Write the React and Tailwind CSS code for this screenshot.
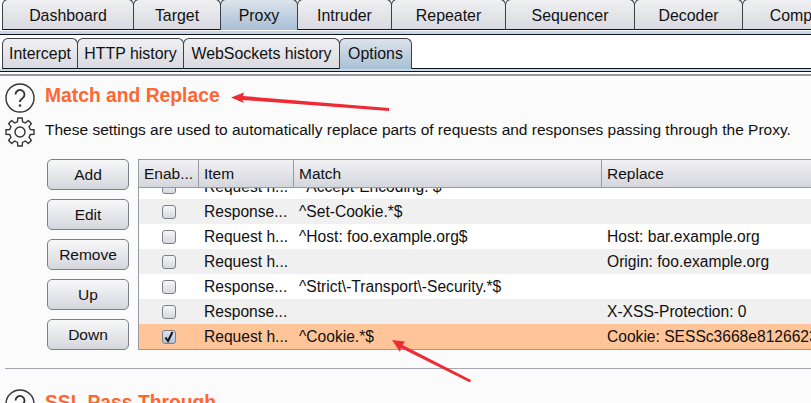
import React from 'react';

const mainTabs = [
  ['Dashboard', 132], ['Target', 88], ['Proxy', 78], ['Intruder', 95],
  ['Repeater', 115], ['Sequencer', 130], ['Decoder', 109], ['Comparer', 126],
];
const subTabs = [['Intercept', 76], ['HTTP history', 107], ['WebSockets history', 157], ['Options', 73]];
const buttons = ['Add', 'Edit', 'Remove', 'Up', 'Down'];
const rows = [
  ['Request h...', '^Accept-Encoding: $', ''],
  ['Response...', '^Set-Cookie.*$', ''],
  ['Request h...', '^Host: foo.example.org$', 'Host: bar.example.org'],
  ['Request h...', '', 'Origin: foo.example.org'],
  ['Response...', '^Strict\\-Transport\\-Security.*$', ''],
  ['Response...', '', 'X-XSS-Protection: 0'],
  ['Request h...', '^Cookie.*$', 'Cookie: SESSc3668e81266231ab'],
];

function Tab({ label, width, active, main }) {
  return (
    <div
      style={{ width }}
      className={`shrink-0 h-[31px] flex items-center justify-center rounded-t-[6px] border border-[#3c3f48] text-[15.900px] whitespace-nowrap overflow-hidden -mr-px bg-linear-to-b ${
        main ? '-mt-px pt-[2px]' : ''
      } ${
        active ? 'border-b-0 from-[#dde3ea] to-[#a8bfd6] relative z-10' : 'border-b-[#10141f] from-[#f0f0f2] to-[#d9dae0]'
      }`}
    >
      {label}
    </div>
  );
}

function QuestionIcon() {
  return (
    <svg className="shrink-0" width="30" height="30" viewBox="0 0 30 30" fill="none" stroke="#333" strokeWidth="1.4">
      <circle cx="15" cy="15" r="14" />
      <path d="M10.500 11.500a4.500 4.500 0 1 1 7 3.700c-1.600 1-2.500 1.800-2.500 3.800" strokeWidth="1.800" />
      <circle cx="15" cy="22.500" r="1.300" fill="#333" stroke="none" />
    </svg>
  );
}

// eight teeth around a round body
function gearPath() {
  const pt = (deg, r) => {
    const a = (deg * Math.PI) / 180;
    return `${(15 + r * Math.cos(a)).toFixed(2)} ${(15 + r * Math.sin(a)).toFixed(2)}`;
  };
  let d = '';
  for (let i = 0; i < 8; i++) {
    const a = i * 45 - 90;
    d += `${i === 0 ? 'M' : 'A10.500 10.500 0 0 1'} ${pt(a - 14, 10.5)} L${pt(a - 9, 14.2)} L${pt(a + 9, 14.2)} L${pt(a + 14, 10.5)} `;
  }
  return d + 'A10.500 10.500 0 0 1 ' + pt(-104, 10.5) + 'Z';
}

function GearIcon() {
  return (
    <svg className="shrink-0" width="30" height="30" viewBox="0 0 30 30" fill="none" stroke="#333" strokeWidth="1.400" strokeLinejoin="round">
      <path d={gearPath()} />
      <circle cx="15" cy="15" r="5" />
    </svg>
  );
}

function Checkbox({ checked }) {
  return (
    <div className={`w-[14px] h-[14px] rounded-[3px] border border-[#7d7f86] flex items-center justify-center bg-linear-to-b ${
      checked ? 'from-[#dbe4ee] to-[#afc3d8]' : 'from-[#f6f6f8] to-[#d8d9df]'
    }`}>
      {checked && (
        <svg width="12" height="12" viewBox="0 0 12 12" fill="none" stroke="#111" strokeWidth="2">
          <path d="M2.500 6.500 5 10 9.500 1" />
        </svg>
      )}
    </div>
  );
}

function Row({ row, index }) {
  const selected = index === rows.length - 1;
  const bg = selected ? 'bg-[#ffc599]' : index % 2 === 1 ? 'bg-[#f0f0f0]' : 'bg-white';
  return (
    <div className={`flex h-[25px] items-center text-[15.600px] whitespace-nowrap ${bg} ${index === 0 ? '-mt-[14px]' : ''}`}>
      <div className="w-[60px] flex justify-center"><Checkbox checked={selected} /></div>
      <div className="w-[95px] pl-[5px]">{row[0]}</div>
      <div className="w-[308px] pl-[5px]">{row[1]}</div>
      <div className="flex-1 pl-[5px] overflow-hidden">{row[2]}</div>
    </div>
  );
}

export default function App() {
  return (
    <div className="relative w-[811px] h-[403px] overflow-hidden bg-[#fbfbfb] text-[15.500px] text-[#111] font-['Liberation_Sans',Arial,sans-serif]">
      {/* main tabs */}
      <div className="flex pl-[2px] h-[31px] overflow-hidden">
        {mainTabs.map(([label, width]) => (
          <Tab key={label} label={label} width={width} active={label === 'Proxy'} main />
        ))}
      </div>
      <div className="h-[4px] border-b border-[#10141f] bg-[#c9d7e5]" />

      {/* proxy sub tabs */}
      <div className="flex pl-[2px] pt-[3px] h-[34px] bg-white">
        {subTabs.map(([label, width]) => (
          <Tab key={label} label={label} width={width} active={label === 'Options'} />
        ))}
        <div className="flex-1 border-b border-[#10141f] ml-px" />
      </div>
      <div className="h-[3px] bg-[#c9d7e5] border-b border-[#10141f]" />
      <div className="h-[4px] bg-white border-b-2 border-[#9a9aa3]" />

      {/* section header */}
      <div className="flex pl-[5px] pt-[7px] gap-[10px]">
        <div className="flex flex-col gap-[4px]">
          <QuestionIcon />
          <GearIcon />
        </div>
        <div className="flex flex-col">
          <h2 className="text-[19.300px] leading-[24px] mt-[1px] font-bold text-[#ff6633]">Match and Replace</h2>
          <p className="mt-[12px] leading-[20px] whitespace-nowrap">
            These settings are used to automatically replace parts of requests and responses passing through the Proxy.
          </p>
        </div>
      </div>

      {/* buttons and rules table */}
      <div className="flex pl-[47px] mt-[12px]">
        <div className="w-[82px] flex flex-col gap-[9px] shrink-0">
          {buttons.map((label) => (
            <div key={label} className="h-[31px] rounded-[5px] border border-[#7d7f86] flex items-center justify-center bg-linear-to-b from-[#f8f8f9] to-[#d5d7de]">
              {label}
            </div>
          ))}
        </div>
        <div className="ml-[9px] flex-1 h-[191px] border-t border-l border-b border-[#9a9aa3] overflow-hidden">
          <div className="flex h-[28px] bg-linear-to-b from-[#f1f1f3] to-[#d5d7de] border-b border-[#9a9aa3] relative z-10">
            <div className="w-[60px] pl-[5px] leading-[27px] border-r border-[#9a9aa3]">Enab...</div>
            <div className="w-[95px] pl-[5px] leading-[27px] border-r border-[#9a9aa3]">Item</div>
            <div className="w-[308px] pl-[5px] leading-[27px] border-r border-[#9a9aa3]">Match</div>
            <div className="flex-1 pl-[5px] leading-[27px]">Replace</div>
          </div>
          {rows.map((row, i) => (
            <Row key={i} row={row} index={i} />
          ))}
        </div>
      </div>

      <div className="ml-[5px] mt-[18px] h-px bg-[#a5a5ad]" />

      {/* next section, cut off by the window */}
      <div className="flex pl-[5px] pt-[20px] gap-[10px]">
        <QuestionIcon />
        <h2 className="text-[19.300px] leading-[24px] mt-[2px] font-bold text-[#ff6633]">SSL Pass Through</h2>
      </div>

      {/* annotation arrows */}
      <svg className="absolute left-0 top-0 pointer-events-none" width="811" height="403" fill="#ee2a35" stroke="none">
        <path d="M231 97.500 244 92.500 243 96 389 108 389 111 242.500 100 244 103z" />
        <path d="M392 340 405 341.500 402.500 345 471 380 470 382.500 401 348 400 352z" />
      </svg>
    </div>
  );
}
